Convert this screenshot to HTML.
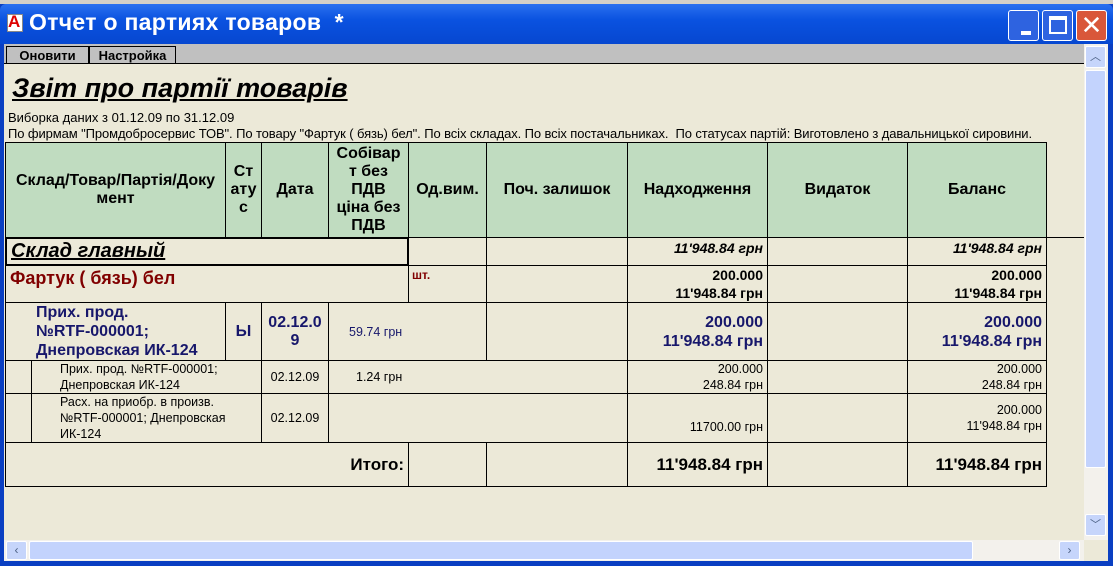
<!DOCTYPE html>
<html><head><meta charset="utf-8"><style>
*{margin:0;padding:0;box-sizing:border-box}
body{width:1113px;height:566px;overflow:hidden;background:#0a3fc2;font-family:"Liberation Sans",Arial,sans-serif;position:relative}
.a{position:absolute}
.c{position:absolute;border:1px solid #000;font-size:15px;font-weight:bold;color:#000;display:flex;align-items:center}
.r{justify-content:flex-end;text-align:right;padding-right:4px}
.ctr{justify-content:center;text-align:center}
.sm{font-weight:normal;font-size:12.5px}
.bl{color:#17176b}
.h{background:#c0dcc0;font-size:16px}
</style></head><body>
<div class="a" style="left:0;top:0;width:1113px;height:4px;background:#d4d0c8"></div>
<div class="a" style="left:0;top:4px;width:1113px;height:40px;background:linear-gradient(#2a70f0,#0a52e0 40%,#0647d0);border-radius:6px 6px 0 0"></div>
<div class="a" style="left:7px;top:14px;width:16px;height:18px;background:#fff;border:1px solid #888"></div>
<div class="a" style="left:8px;top:12px;color:#d00;font-weight:bold;font-size:17px">A</div>
<div class="a" style="left:29px;top:9px;color:#fff;font-size:23px;font-weight:bold;letter-spacing:0.3px">Отчет о партиях товаров &nbsp;*</div>
<div class="a" style="left:1008px;top:10px;width:31px;height:31px;background:#2e63e0;border:1px solid #fff;border-radius:3px"><div class="a" style="left:12px;top:20px;width:10px;height:4px;background:#fff"></div></div>
<div class="a" style="left:1042px;top:10px;width:31px;height:31px;background:#2e63e0;border:1px solid #fff;border-radius:3px"><div class="a" style="left:6px;top:5px;width:18px;height:18px;border:2px solid #fff;border-top-width:4px"></div></div>
<div class="a" style="left:1076px;top:10px;width:31px;height:31px;background:#d9573a;border:1px solid #fff;border-radius:3px;color:#fff;font-size:26px;text-align:center;line-height:28px">✕</div>
<div class="a" style="left:4px;top:44px;width:1104px;height:517px;background:#ece9d8"></div>
<div class="a" style="left:4px;top:44px;width:1080px;height:20px;background:#c0c0c0;border-bottom:1px solid #000"></div>
<div class="a" style="left:6px;top:46px;width:83px;height:18px;border:1px solid #000;border-bottom:none;font-size:13px;font-weight:bold;text-align:center;line-height:17px">Оновити</div>
<div class="a" style="left:89px;top:46px;width:87px;height:18px;border:1px solid #000;border-bottom:none;font-size:13px;font-weight:bold;text-align:center;line-height:17px">Настройка</div>
<div class="a" style="left:1084px;top:44px;width:24px;height:496px;background:#f3f1ec"></div>
<div class="a" style="left:1085px;top:46px;width:21px;height:22px;background:#c6d5fb;border:1px solid #fff;border-radius:2px;color:#4d6185;font-size:11px;text-align:center;line-height:20px">︿</div>
<div class="a" style="left:1085px;top:70px;width:21px;height:398px;background:#c3d3fd;border:1px solid #fff;border-radius:2px"></div>
<div class="a" style="left:1085px;top:514px;width:21px;height:22px;background:#c6d5fb;border:1px solid #fff;border-radius:2px;color:#4d6185;font-size:11px;text-align:center;line-height:20px">﹀</div>
<div class="a" style="left:4px;top:540px;width:1080px;height:21px;background:#f3f1ec"></div>
<div class="a" style="left:6px;top:541px;width:21px;height:19px;background:#c6d5fb;border:1px solid #fff;border-radius:2px;color:#4d6185;font-size:12px;text-align:center;line-height:17px">‹</div>
<div class="a" style="left:29px;top:541px;width:944px;height:19px;background:#c3d3fd;border:1px solid #fff;border-radius:2px"></div>
<div class="a" style="left:1059px;top:541px;width:21px;height:19px;background:#c6d5fb;border:1px solid #fff;border-radius:2px;color:#4d6185;font-size:12px;text-align:center;line-height:17px">›</div>

<div class="a" style="left:12px;top:73px;font-size:27px;font-weight:bold;font-style:italic;text-decoration:underline">Звіт про партії товарів</div>
<div class="a" style="left:8px;top:110px;font-size:13px">Виборка даних з 01.12.09 по 31.12.09</div>
<div class="a" style="left:8px;top:126px;font-size:13px;white-space:nowrap;letter-spacing:-0.1px">По фирмам "Промдобросервис ТОВ". По товару "Фартук ( бязь) бел". По всіх складах. По всіх постачальниках.&nbsp; По статусах партій: Виготовлено з давальницької сировини.</div>

<!-- header -->
<div class="c h ctr" style="left:5px;top:142px;width:221px;height:96px">Склад/Товар/Партія/Доку мент</div>
<div class="c h ctr" style="left:225px;top:142px;width:37px;height:96px">Ст ату с</div>
<div class="c h ctr" style="left:261px;top:142px;width:68px;height:96px">Дата</div>
<div class="c h ctr" style="left:328px;top:142px;width:81px;height:96px;line-height:18px;padding:0 6px">Собівар т без ПДВ ціна без ПДВ</div>
<div class="c h ctr" style="left:408px;top:142px;width:79px;height:96px">Од.вим.</div>
<div class="c h ctr" style="left:486px;top:142px;width:142px;height:96px">Поч. залишок</div>
<div class="c h ctr" style="left:627px;top:142px;width:141px;height:96px">Надходження</div>
<div class="c h ctr" style="left:767px;top:142px;width:141px;height:96px">Видаток</div>
<div class="c h ctr" style="left:907px;top:142px;width:140px;height:96px">Баланс</div>
<div class="a" style="left:1046px;top:237px;width:38px;height:1px;background:#000"></div>

<!-- row склад -->
<div class="c" style="left:5px;top:237px;width:404px;height:29px;border-width:2px;font-size:20px;font-style:italic;text-decoration:underline;padding-left:4px">Склад главный</div>
<div class="c" style="left:408px;top:237px;width:79px;height:29px"></div>
<div class="c" style="left:486px;top:237px;width:142px;height:29px"></div>
<div class="c r" style="left:627px;top:237px;width:141px;height:29px;font-style:italic;font-size:14px;align-items:flex-start;padding-top:2px">11'948.84 грн</div>
<div class="c" style="left:767px;top:237px;width:141px;height:29px"></div>
<div class="c r" style="left:907px;top:237px;width:140px;height:29px;font-style:italic;font-size:14px;align-items:flex-start;padding-top:2px">11'948.84 грн</div>

<!-- row товар -->
<div class="c" style="left:5px;top:265px;width:404px;height:38px;color:#800000;font-size:18px;align-items:flex-start;padding:2px 0 0 4px">Фартук ( бязь) бел</div>
<div class="c" style="left:408px;top:265px;width:79px;height:38px;color:#800000;font-size:12px;align-items:flex-start;padding:2px 0 0 3px">шт.</div>
<div class="c" style="left:486px;top:265px;width:142px;height:38px"></div>
<div class="c r" style="left:627px;top:265px;width:141px;height:38px;font-size:14px;line-height:18px">200.000<br>11'948.84 грн</div>
<div class="c" style="left:767px;top:265px;width:141px;height:38px"></div>
<div class="c r" style="left:907px;top:265px;width:140px;height:38px;font-size:14px;line-height:18px">200.000<br>11'948.84 грн</div>

<!-- row партия -->
<div class="c bl" style="left:5px;top:302px;width:221px;height:59px;padding-left:30px;line-height:19px;font-size:16px;align-items:flex-end">Прих. прод.<br>№RTF-000001;<br>Днепровская ИК-124</div>
<div class="c bl ctr" style="left:225px;top:302px;width:37px;height:59px;font-size:16px">Ы</div>
<div class="c bl ctr" style="left:261px;top:302px;width:68px;height:59px;line-height:18px;font-size:16px">02.12.0<br>9</div>
<div class="c bl sm" style="left:328px;top:302px;width:159px;height:59px;padding-left:20px">59.74 грн</div>
<div class="c" style="left:486px;top:302px;width:142px;height:59px"></div>
<div class="c r bl" style="left:627px;top:302px;width:141px;height:59px;font-size:16px;line-height:19px">200.000<br>11'948.84 грн</div>
<div class="c" style="left:767px;top:302px;width:141px;height:59px"></div>
<div class="c r bl" style="left:907px;top:302px;width:140px;height:59px;font-size:16px;line-height:19px">200.000<br>11'948.84 грн</div>

<!-- doc1 -->
<div class="c" style="left:5px;top:360px;width:27px;height:34px"></div>
<div class="c sm" style="left:31px;top:360px;width:231px;height:34px;padding-left:28px;line-height:16px">Прих. прод. №RTF-000001;<br>Днепровская ИК-124</div>
<div class="c sm ctr" style="left:261px;top:360px;width:68px;height:34px">02.12.09</div>
<div class="c sm" style="left:328px;top:360px;width:300px;height:34px;padding-left:27px">1.24 грн</div>
<div class="c sm r" style="left:627px;top:360px;width:141px;height:34px;line-height:16px">200.000<br>248.84 грн</div>
<div class="c" style="left:767px;top:360px;width:141px;height:34px"></div>
<div class="c sm r" style="left:907px;top:360px;width:140px;height:34px;line-height:16px">200.000<br>248.84 грн</div>

<!-- doc2 -->
<div class="c" style="left:5px;top:393px;width:27px;height:50px"></div>
<div class="c sm" style="left:31px;top:393px;width:231px;height:50px;padding-left:28px;line-height:16px">Расх. на приобр. в произв.<br>№RTF-000001; Днепровская<br>ИК-124</div>
<div class="c sm ctr" style="left:261px;top:393px;width:68px;height:50px">02.12.09</div>
<div class="c sm" style="left:328px;top:393px;width:300px;height:50px"></div>
<div class="c sm r" style="left:627px;top:393px;width:141px;height:50px;align-items:flex-end;padding-bottom:8px">11700.00 грн</div>
<div class="c" style="left:767px;top:393px;width:141px;height:50px"></div>
<div class="c sm r" style="left:907px;top:393px;width:140px;height:50px;line-height:16px">200.000<br>11'948.84 грн</div>

<!-- итого -->
<div class="c r" style="left:5px;top:442px;width:404px;height:45px;font-size:17px">Итого:</div>
<div class="c" style="left:408px;top:442px;width:79px;height:45px"></div>
<div class="c" style="left:486px;top:442px;width:142px;height:45px"></div>
<div class="c r" style="left:627px;top:442px;width:141px;height:45px;font-size:17px">11'948.84 грн</div>
<div class="c" style="left:767px;top:442px;width:141px;height:45px"></div>
<div class="c r" style="left:907px;top:442px;width:140px;height:45px;font-size:17px">11'948.84 грн</div>
</body></html>
